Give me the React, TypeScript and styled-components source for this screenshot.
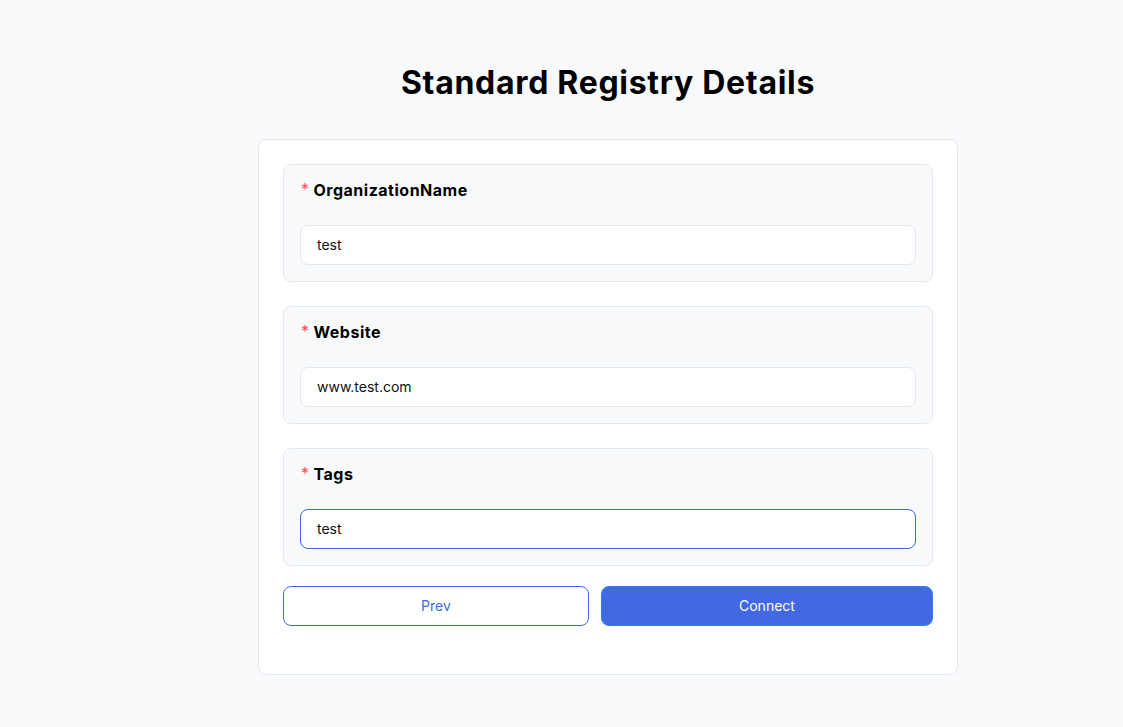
import styled, { createGlobalStyle } from "styled-components";

const fields = [
    { label: "OrganizationName", value: "test" },
    { label: "Website", value: "www.test.com" },
    { label: "Tags", value: "test", focused: true },
];

const App = () => {
    return (
        <>
            <GlobalStyle />
            <Page>
                <Title>Standard Registry Details</Title>
                <Card>
                    <Fields>
                        {fields.map((field) => (
                            <Section key={field.label}>
                                <Label>
                                    <Required>*</Required>
                                    {field.label}
                                </Label>
                                <Input $focused={!!field.focused} defaultValue={field.value} />
                            </Section>
                        ))}
                    </Fields>
                    <Actions>
                        <Button>Prev</Button>
                        <Button $primary>Connect</Button>
                    </Actions>
                </Card>
            </Page>
        </>
    );
};

const GlobalStyle = createGlobalStyle`
    html, body {
        margin: 0;
        background: #f8f9fb;
        font-family: Inter, "Noto Sans", sans-serif;
    }
`;

const Page = styled.div`
    min-height: 727px;
    display: flex;
    flex-direction: column;
    align-items: center;
    padding-top: 59px;
    padding-left: 93px;
    box-sizing: border-box;
`;

const Title = styled.h1`
    margin: 0 0 32px;
    font-size: 32px;
    line-height: 48px;
    font-weight: 700;
    letter-spacing: 0.7px;
    color: #000;
`;

const Card = styled.div`
    width: 700px;
    box-sizing: border-box;
    background: #fff;
    border: 1px solid #e2e8f0;
    border-radius: 8px;
    padding: 24px 24px 48px;
`;

const Fields = styled.div`
    display: flex;
    flex-direction: column;
    gap: 24px;
`;

const Section = styled.div`
    background: #f8f9fb;
    border: 1px solid #e2e8f0;
    border-radius: 8px;
    padding: 13px 16px 16px;
`;

const Label = styled.div`
    display: flex;
    align-items: center;
    gap: 4px;
    font-size: 16px;
    line-height: 24px;
    font-weight: 700;
    letter-spacing: 0.5px;
    color: #000;
    margin-bottom: 23px;
    padding-left: 1px;
`;

const Required = styled.span`
    color: #ff4d4f;
    font-size: 16px;
    font-weight: 400;
    margin-top: -2px;
`;

const Input = styled.input<{ $focused: boolean }>`
    display: block;
    width: 100%;
    height: 40px;
    box-sizing: border-box;
    padding: 0 16px 2px;
    border: 1px solid ${(p) => (p.$focused ? "#4169e1" : "#e2e8f0")};
    border-radius: 8px;
    background: #fff;
    font-family: Inter, "Noto Sans", sans-serif;
    font-size: 14px;
    color: #111;
    outline: none;
`;

const Actions = styled.div`
    display: flex;
    gap: 12px;
    margin-top: 20px;
`;

const Button = styled.button<{ $primary?: boolean }>`
    flex: 1 1 auto;
    height: 40px;
    padding-bottom: 2px;
    border-radius: 8px;
    border: 1px solid ${(p) => (p.$primary ? "#2f80ed" : "#4169e1")};
    background: ${(p) => (p.$primary ? "#4169e1" : "#fff")};
    color: ${(p) => (p.$primary ? "#fff" : "#4169e1")};
    font-family: Inter, "Noto Sans", sans-serif;
    font-size: 14px;
    cursor: pointer;
`;

export default App;
